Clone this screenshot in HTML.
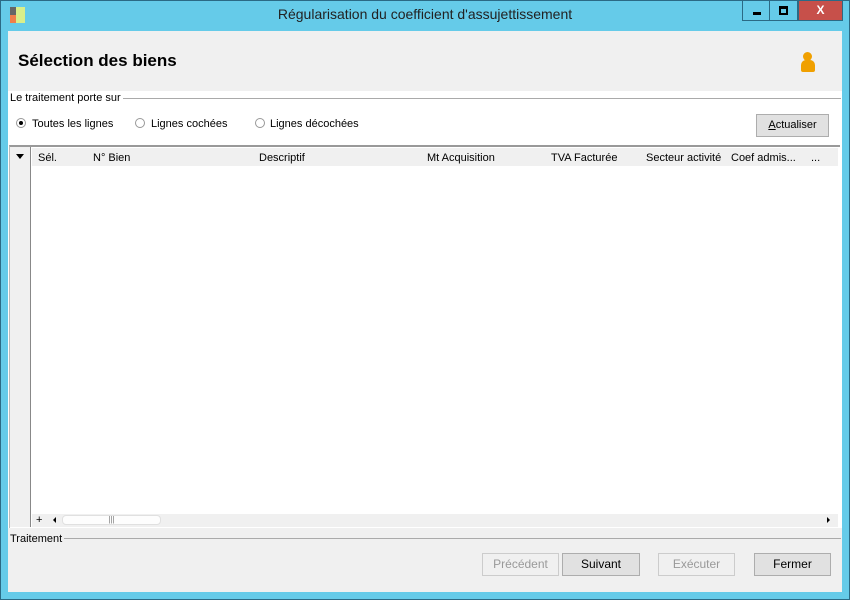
<!DOCTYPE html>
<html><head><style>
*{margin:0;padding:0;box-sizing:border-box}
body{width:850px;height:600px;background:#65cbe9;position:relative;font-family:"Liberation Sans",sans-serif;font-size:11px;color:#000;overflow:hidden}
.a{position:absolute}
.btn{position:absolute;border:1px solid #adadad;background:#e1e1e1;text-align:center;font-size:12px;line-height:21px}
.dis{background:#f0f0f0;border-color:#ccc;color:#999}
.rad{position:absolute;width:10px;height:10px;border:1px solid #999;border-radius:50%;background:#fff}
</style></head><body>
<div class="a" style="left:0;top:0;width:850px;height:600px;border:1px solid #2b6a85"></div>
<div class="a" style="left:10px;top:7px;width:6px;height:8px;background:#666"></div>
<div class="a" style="left:10px;top:15px;width:6px;height:8px;background:#f07f4a"></div>
<div class="a" style="left:16px;top:7px;width:9px;height:16px;background:#d9ef8a"></div>
<div class="a" style="left:0;top:6px;width:850px;text-align:center;font-size:14px;color:#222">Régularisation du coefficient d'assujettissement</div>
<div class="a" style="left:742px;top:1px;width:28px;height:20px;border:1px solid #2b6a85;border-top:none"><div class="a" style="left:10px;top:11px;width:8px;height:3px;background:#000"></div></div>
<div class="a" style="left:770px;top:1px;width:28px;height:20px;border:1px solid #2b6a85;border-top:none;border-left:none"><div class="a" style="left:9px;top:5px;width:9px;height:9px;border:2px solid #000;border-top-width:3px"></div></div>
<div class="a" style="left:798px;top:1px;width:45px;height:20px;background:#c7504a;border:1px solid #2b6a85;border-top:none;color:#fff;font-weight:bold;font-size:12px;text-align:center;line-height:18px">X</div>
<div class="a" style="left:8px;top:31px;width:834px;height:561px;background:#f0f0f0"></div>
<div class="a" style="left:18px;top:51px;font-size:17px;font-weight:bold">Sélection des biens</div>
<div class="a" style="left:803px;top:52px;width:9px;height:9px;border-radius:50%;background:#f0a000"></div>
<div class="a" style="left:801px;top:60px;width:14px;height:12px;border-radius:5px 5px 2px 2px;background:#f0a000"></div>
<div class="a" style="left:8px;top:91px;width:834px;height:437px;background:#fff"></div>
<div class="a" style="left:80px;top:98px;width:761px;border-top:1px solid #aaa"></div>
<div class="a" style="left:10px;top:92px;background:#fff;padding-right:2px">Le traitement porte sur</div>
<div class="rad" style="left:16px;top:118px"><div class="a" style="left:2px;top:2px;width:4px;height:4px;border-radius:50%;background:#000"></div></div>
<div class="a" style="left:32px;top:118px">Toutes les lignes</div>
<div class="rad" style="left:135px;top:118px"></div>
<div class="a" style="left:151px;top:118px">Lignes cochées</div>
<div class="rad" style="left:255px;top:118px"></div>
<div class="a" style="left:270px;top:118px">Lignes décochées</div>
<div class="btn" style="left:756px;top:114px;width:73px;height:23px;font-size:11px"><u>A</u>ctualiser</div>
<div class="a" style="left:9px;top:145px;width:831px;height:383px;border-top:2px solid #999;border-left:1px solid #bbb"></div>
<div class="a" style="left:10px;top:147px;width:21px;height:380px;background:#f0f0f0;border-right:1px solid #888"></div>
<div class="a" style="left:32px;top:148px;width:806px;height:18px;background:#f0f0f0"></div>
<div class="a" style="left:16px;top:154px;width:0;height:0;border-left:4px solid transparent;border-right:4px solid transparent;border-top:5px solid #000"></div>
<div class="a" style="left:38px;top:152px">Sél.</div>
<div class="a" style="left:93px;top:152px">N° Bien</div>
<div class="a" style="left:259px;top:152px">Descriptif</div>
<div class="a" style="left:427px;top:152px">Mt Acquisition</div>
<div class="a" style="left:551px;top:152px">TVA Facturée</div>
<div class="a" style="left:646px;top:152px">Secteur activité</div>
<div class="a" style="left:731px;top:152px">Coef admis...</div>
<div class="a" style="left:811px;top:152px">...</div>
<div class="a" style="left:32px;top:514px;width:806px;height:13px;background:#f0f0f0"></div>
<div class="a" style="left:36px;top:514px;font-size:11px">+</div>
<div class="a" style="left:53px;top:517px;border-top:3px solid transparent;border-bottom:3px solid transparent;border-right:3px solid #000"></div>
<div class="a" style="left:62px;top:515px;width:99px;height:10px;background:#fdfdfd;border-radius:4px;border:1px solid #e0e0e0;font-size:8px;text-align:center;line-height:8px;color:#777">|||</div>
<div class="a" style="left:827px;top:517px;border-top:3px solid transparent;border-bottom:3px solid transparent;border-left:3px solid #000"></div>
<div class="a" style="left:62px;top:538px;width:779px;border-top:1px solid #aaa"></div>
<div class="a" style="left:10px;top:533px;background:#f0f0f0;padding-right:2px">Traitement</div>
<div class="btn dis" style="left:482px;top:553px;width:77px;height:23px">Précédent</div>
<div class="btn" style="left:562px;top:553px;width:78px;height:23px">Suivant</div>
<div class="btn dis" style="left:658px;top:553px;width:77px;height:23px">Exécuter</div>
<div class="btn" style="left:754px;top:553px;width:77px;height:23px">Fermer</div>
</body></html>
